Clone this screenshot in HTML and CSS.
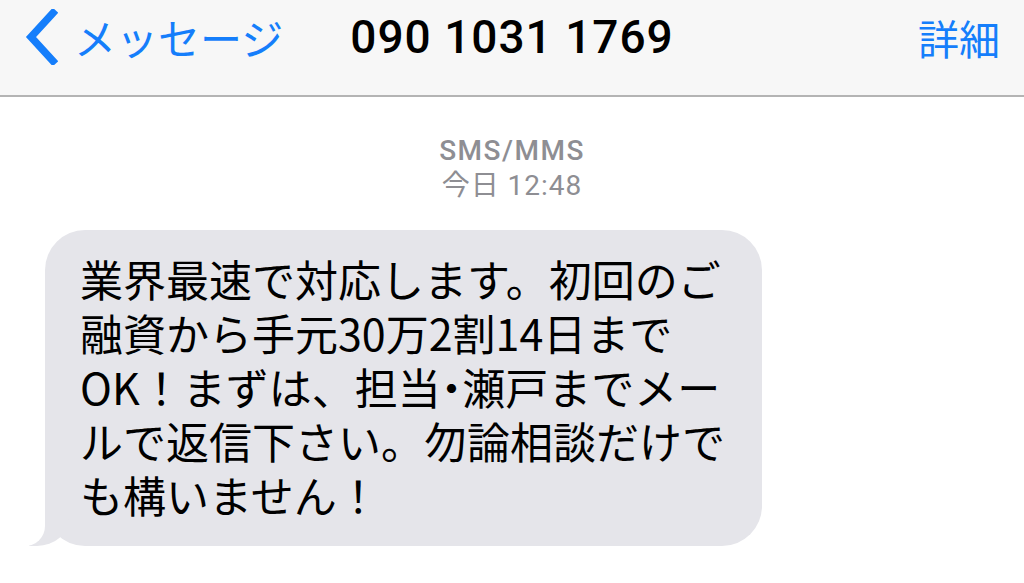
FILE: index.html
```html
<!DOCTYPE html>
<html lang="ja">
<head>
    <meta charset="UTF-8">
    <meta name="viewport" content="width=device-width, initial-scale=1.0">
    <title>090 1031 1769</title>
    <link rel="stylesheet" href="styles.css">
</head>
<body>

    <header class="nav-bar">
        <a class="nav-back" href="#">
            <svg class="back-chevron" width="34" height="56" viewBox="0 0 34 56">
                <polyline points="29,4 7,28 29,52" fill="none" stroke="#157efb" stroke-width="7.5" stroke-linecap="square" stroke-linejoin="miter"/>
            </svg>
            <span>メッセージ</span>
        </a>
        <h1 class="nav-title">090 1031 1769</h1>
        <a class="nav-detail" href="#">詳細</a>
    </header>

    <main class="thread">
        <div class="thread-meta">
            <div class="meta-service">SMS/MMS</div>
            <div class="meta-time">今日 12:48</div>
        </div>

        <div class="bubble">
            業界最速で対応します。初回のご<br>
            融資から手元30万2割14日まで<br>
            OK！まずは、担当<span class="half">・</span>瀬戸までメー<br>
            ルで返信下さい。勿論相談だけで<br>
            も構いません！
        </div>
    </main>

</body>
</html>
```

FILE: styles.css
```css
body {
    margin: 0;
    background: #fff;
    font-family: 'Noto Sans CJK JP', sans-serif;
    overflow: hidden;
}

.nav-bar {
    display: grid;
    grid-template-columns: 1fr auto 1fr;
    align-items: center;
    height: 95px;
    padding: 0 24px 0 24px;
    background: #f7f7f7;
    border-bottom: 2px solid #b4b4b4;
}

.nav-back {
    display: flex;
    align-items: center;
    gap: 16px;
    color: #157efb;
    text-decoration: none;
    font-size: 42px;
    margin-top: -22px;
}

.back-chevron {
    flex-shrink: 0;
}

.nav-title {
    margin: 0;
    margin-top: -22px;
    font-family: Roboto, 'Noto Sans', sans-serif;
    font-size: 46px;
    font-weight: 500;
    letter-spacing: 1px;
    color: #000;
}

.nav-detail {
    justify-self: end;
    margin-top: -22px;
    color: #157efb;
    text-decoration: none;
    font-size: 41px;
}

.thread {
    padding: 36px 0 0 45px;
}

.thread-meta {
    margin-left: -45px;
    text-align: center;
    color: #8e8e93;
    font-size: 28px;
    line-height: 35px;
}

.meta-service {
    font-family: Roboto, 'Noto Sans', sans-serif;
    font-weight: 500;
    letter-spacing: 1.5px;
}

.meta-time {
    font-family: Roboto, 'Noto Sans CJK JP', sans-serif;
    letter-spacing: 1px;
}

.bubble {
    position: relative;
    width: 647px;
    margin-top: 27px;
    padding: 21px 35px 25px 35px;
    background: #e5e5ea;
    border-radius: 40px;
    color: #000;
    font-size: 43px;
    line-height: 54px;
    white-space: nowrap;
}

.bubble .half {
    font-feature-settings: "halt";
}

.bubble::before {
    content: "";
    position: absolute;
    left: -16px;
    bottom: 0;
    width: 40px;
    height: 40px;
    background: #e5e5ea;
    border-bottom-right-radius: 32px 28px;
}

.bubble::after {
    content: "";
    position: absolute;
    left: -40px;
    bottom: 0;
    width: 40px;
    height: 42px;
    background: #fff;
    border-bottom-right-radius: 20px;
}
```
